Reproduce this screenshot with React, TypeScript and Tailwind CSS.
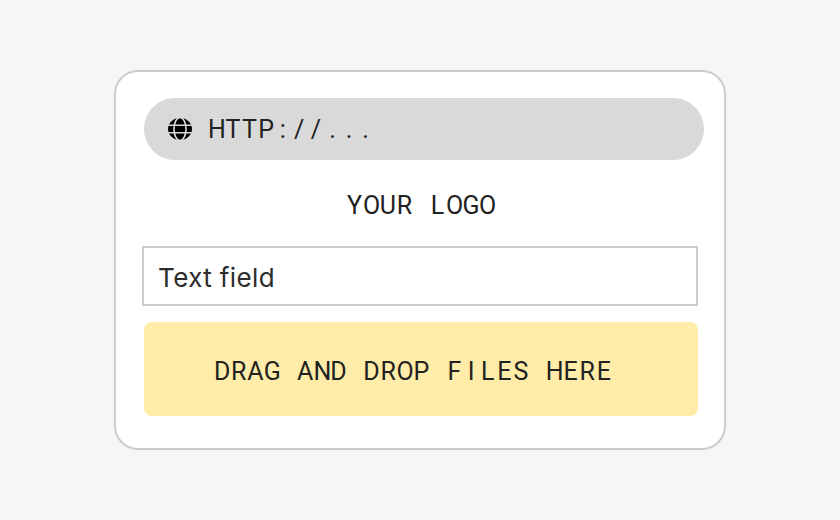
import React from 'react';

// Fixed pitch cells, the picture's text is monospaced
function MonoText({ text }: { text: string }) {
  return (
    <span className="whitespace-pre font-['Roboto',sans-serif] text-[25px] leading-[30px] text-[#222222]">
      {text.split('').map((ch, i) => (
        <span key={i} className="inline-block w-[16.6px] text-center">
          {ch}
        </span>
      ))}
    </span>
  );
}

function GlobeIcon() {
  return (
    <svg width="24" height="24" viewBox="0 0 24 24" fill="none">
      <ellipse cx="12" cy="12" rx="12" ry="11" fill="#000000" />
      <ellipse cx="12" cy="12" rx="6" ry="11.5" stroke="#d9d9d9" strokeWidth="1.6" />
      <path d="M0 8.2H24M0 15.8H24" stroke="#d9d9d9" strokeWidth="1.6" />
    </svg>
  );
}

export default function App() {
  return (
    <div className="flex h-[520px] w-[840px] items-center justify-center bg-[#f6f6f6]">
      <div className="flex h-[380px] w-[612px] flex-col rounded-[24px] border-2 border-[#cccccc] bg-white pl-[26px] pr-[20px] pt-[26px]">
        {/* Address bar */}
        <div className="ml-[2px] flex h-[62px] w-[560px] items-center gap-[16px] rounded-[31px] bg-[#d9d9d9] pl-[24px]">
          <GlobeIcon />
          <div className="pt-[2px]">
            <MonoText text="HTTP://..." />
          </div>
        </div>

        <div className="mt-[31px] ml-[2px] flex w-[554px] justify-center">
          <MonoText text="YOUR LOGO" />
        </div>

        {/* Text field */}
        <div className="mt-[25px] flex h-[60px] w-[556px] items-center border-2 border-[#cccccc] pl-[14px] pt-[2px]">
          <span className="font-['Inter',sans-serif] text-[26px] tracking-[0.4px] text-[#2c2c2c]">Text field</span>
        </div>

        {/* Drop zone */}
        <div className="mt-[16px] ml-[2px] flex h-[94px] w-[554px] items-center justify-center rounded-[8px] bg-[#ffeca8] pr-[16px] pt-[6px]">
          <MonoText text="DRAG AND DROP FILES HERE" />
        </div>
      </div>
    </div>
  );
}
